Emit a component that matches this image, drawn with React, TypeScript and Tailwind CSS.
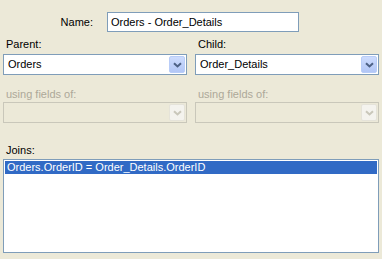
import React from "react";

const font = "font-['Liberation_Sans',Arial,sans-serif]";

function Chevron({ disabled }: { disabled?: boolean }) {
  return (
    <svg width="9" height="6" viewBox="0 0 9 6" className="block">
      <path
        d="M1 1.2 L4.5 4.5 L8 1.2"
        fill="none"
        stroke={disabled ? "#c9c7ba" : "#4d6185"}
        strokeWidth="2"
      />
    </svg>
  );
}

function Combo({ value, disabled }: { value?: string; disabled?: boolean }) {
  return (
    <div
      className={
        disabled
          ? "flex h-[21px] items-stretch border border-[#c9c7ba] bg-[#ece9d8] p-px"
          : "flex h-[21px] items-stretch border border-[#7f9db9] bg-white p-px"
      }
    >
      <div className="flex flex-1 items-center pl-[3px] text-[11px] leading-[13px] text-black">
        {value}
      </div>
      <div
        className={
          disabled
            ? "flex w-4 items-center justify-center rounded-[2px] border border-[#e5e3d9] bg-[#f4f3ee]"
            : "flex w-4 items-center justify-center rounded-[2px] border border-[#b9cdf8] bg-gradient-to-b from-[#cddcfd] to-[#b2c6f6]"
        }
      >
        <Chevron disabled={disabled} />
      </div>
    </div>
  );
}

export default function App() {
  return (
    <div className={`${font} h-[259px] w-[382px] bg-[#ece9d8] px-[3px] pt-[12px] text-[11px] leading-[13px]`}>
      <div className="flex h-[20px] items-center">
        <label className="w-[90px] text-right text-black">Name:</label>
        <div className="ml-[14px] flex h-[20px] w-[192px] items-center border border-[#7f9db9] bg-white pl-[3px] text-black">
          Orders - Order_Details
        </div>
      </div>

      <div className="mt-[6px] grid grid-cols-2 gap-x-2">
        <div>
          <div className="h-[13px] pl-[3px] text-black">Parent:</div>
          <div className="mt-[3px]">
            <Combo value="Orders" />
          </div>
          <div className="mt-[13px] h-[13px] pl-[3px] text-[#aca899]">using fields of:</div>
          <div className="mt-px">
            <Combo disabled />
          </div>
        </div>
        <div>
          <div className="h-[13px] pl-[3px] text-black">Child:</div>
          <div className="mt-[3px]">
            <Combo value="Order_Details" />
          </div>
          <div className="mt-[13px] h-[13px] pl-[3px] text-[#aca899]">using fields of:</div>
          <div className="mt-px">
            <Combo disabled />
          </div>
        </div>
      </div>

      <div className="mt-[21px] h-[13px] pl-[3px] text-black">Joins:</div>
      <div className="mt-[2px] h-[94px] border border-[#7f9db9] bg-white p-px">
        <div className="h-[13px] bg-[#316ac5] pl-[2px] text-white">
          Orders.OrderID = Order_Details.OrderID
        </div>
      </div>
    </div>
  );
}
